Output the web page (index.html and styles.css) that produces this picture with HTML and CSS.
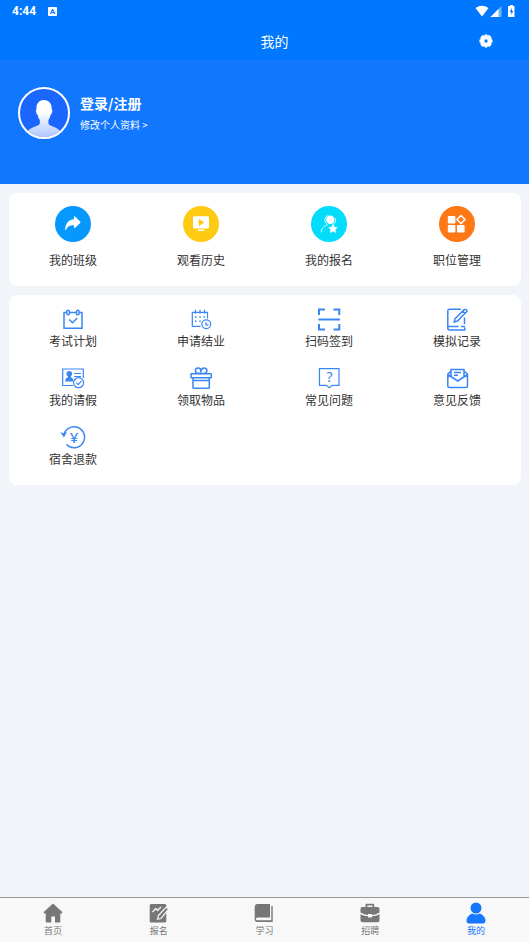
FILE: index.html
```html
<!DOCTYPE html>
<html lang="zh-CN">
<head>
<meta charset="utf-8">
<meta name="viewport" content="width=device-width, initial-scale=1">
<title>我的</title>
<link rel="stylesheet" href="styles.css">
</head>
<body>
<div class="status">
  <span class="clock">4:44</span>
  <svg class="status-app" viewBox="0 0 9 9" aria-hidden="true"><rect width="9" height="9" rx="1" fill="#fff"/><text x="4.5" y="7.2" text-anchor="middle" class="app-letter">A</text></svg>
  <svg class="status-signals" viewBox="0 0 42 14" aria-hidden="true">
    <path d="M0.5 4Q7 -0.6 13.5 4L7 12.5Z" fill="#fff"/>
    <path d="M15.500 13L26.500 2V13Z" fill="#fff" opacity=".45"/><path d="M15.500 13L23.500 5V13Z" fill="#fff"/>
    <path d="M34 2H35V1H38V2H39.500V13H33V2Z" fill="#fff"/><path d="M37 4L34.700 8H36.200V11L38.200 7H37Z" fill="#0878ff"/>
  </svg>
</div>
<header class="titlebar">
  <h1>我的</h1>
  <button class="settings" type="button" aria-label="设置">
    <svg viewBox="0 0 14 14"><path fill="#fff" stroke="#fff" stroke-width=".5" stroke-linejoin="round" fill-rule="evenodd" d="M5.400 1.900L6 .7H8L8.600 1.900L10.300 1.200L12.300 3.300L12 4.900L13.300 5.800V8.200L12 8.900L12.300 10.700L10.600 12.400L8.900 12.100L8 13.300H6L5.200 12.100L3.400 12.400L1.700 10.700L2 9L.7 8.200V5.800L2 4.900L1.700 3.300L3.700 1.200ZM7 5.100A1.900 1.900 0 1 0 7 8.900A1.900 1.900 0 1 0 7 5.100Z"/></svg>
  </button>
</header>
<section class="profile">
  <svg class="avatar" viewBox="0 0 52 52" aria-hidden="true">
    <defs><linearGradient id="bust" x1="0" y1="0" x2="0" y2="1"><stop offset=".3" stop-color="#fff"/><stop offset="1" stop-color="#aac2ff"/></linearGradient><clipPath id="disc"><circle cx="26" cy="26" r="24"/></clipPath></defs>
    <circle cx="26" cy="26" r="25" fill="#1b66ff"/>
    <path clip-path="url(#disc)" fill="url(#bust)" d="M18.500 22C17.500 10 34.500 10 33.700 22C35 23 34 27 32.500 28Q32 31 30.500 33V37C34 40.500 41 40 43 46V52H9V46C11 40 18 40.500 21.800 37V33Q20 31 19.700 28C18 27 17.500 23 18.500 22Z"/>
    <circle cx="26" cy="26" r="25" fill="none" stroke="#fff" stroke-width="2"/>
  </svg>
  <div class="who">
    <a class="login" href="#login">登录/注册</a>
    <a class="edit" href="#profile">修改个人资料 &gt;</a>
  </div>
</section>
<main>
  <nav class="card primary" aria-label="快捷入口">
    <a href="#class"><svg viewBox="0 0 36 36"><circle cx="18" cy="18" r="18" fill="#0798ff"/><path fill="#fff" d="M19 10.800Q19.400 10 20.200 10.700L25.200 15.600Q25.900 16.300 25.200 17L20.200 21.800Q19.400 22.500 19 21.600V19.300C15 19 12.500 20.500 11 23.700Q10.200 24.300 10.200 23C10.500 17.500 13.500 13.600 19 13.200Z"/></svg><span>我的班级</span></a>
    <a href="#history"><svg viewBox="0 0 36 36"><circle cx="18" cy="18" r="18" fill="#ffcb12"/><rect x="10" y="10.300" width="16" height="12.200" rx="1.200" fill="#fff"/><path fill="#ffcb12" d="M16.200 13.600L20.700 16.400L16.200 19.300Z" stroke="#ffcb12" stroke-linejoin="round"/><path d="M15.500 24.300H20.800" stroke="#fff" stroke-width="1.400" stroke-linecap="round"/></svg><span>观看历史</span></a>
    <a href="#signup"><svg viewBox="0 0 36 36"><circle cx="18" cy="18" r="18" fill="#03dcfb"/><circle cx="19.300" cy="13.700" r="4.200" fill="#fff"/><path d="M17 9.300A5.300 5.300 0 0 0 16 18.500M16 19C12.500 20 10.500 22.500 10.200 26M22 18.500C24 17.500 25 15.500 24.300 12.500" fill="none" stroke="#fff" stroke-width=".8" stroke-linecap="round"/><path fill="#fff" stroke="#fff" stroke-width=".6" stroke-linejoin="round" d="M22 18.400L23.300 21.200L26.300 21.500L24.100 23.600L24.700 26.600L22 25.100L19.300 26.600L19.900 23.600L17.700 21.500L20.700 21.200Z"/></svg><span>我的报名</span></a>
    <a href="#jobs"><svg viewBox="0 0 36 36"><circle cx="18" cy="18" r="18" fill="#ff7816"/><g fill="#fff"><rect x="8.800" y="10" width="7.600" height="7.400" rx="1"/><rect x="8.800" y="19" width="7.600" height="7.400" rx="1"/><rect x="18" y="19" width="7.600" height="7.400" rx="1"/></g><path d="M22 9.500L26 13.500L22 17.500L18 13.500Z" fill="none" stroke="#fff" stroke-width="1.600" stroke-linejoin="round"/></svg><span>职位管理</span></a>
  </nav>
  <nav class="card secondary" aria-label="更多服务">
    <a href="#plan"><svg viewBox="0 0 24 24"><path d="M5.500 4.500H3V20.300H21V4.500H18.500M9 4.500H15M8.300 11.500L11.500 14.800L16.200 10"/><rect x="5.800" y="2.300" width="2.600" height="4.500" rx="1.300"/><rect x="15.500" y="2.300" width="2.600" height="4.500" rx="1.300"/></svg><span>考试计划</span></a>
    <a href="#finish"><svg viewBox="0 0 24 24"><path class="thin" d="M11.500 18.300H3.300V4.300H18.500V10.500M6.500 1.800V5.800M11 1.800V5.800M15.500 1.800V5.800"/><path d="M6 9H7.500M10.300 9H11.800M14.500 9H16M6 13.300H7.500M10.300 13.300H11.800"/><circle class="thin" cx="17.300" cy="16.300" r="4.400"/><path class="thin" d="M17 14V16.800H19.500"/></svg><span>申请结业</span></a>
    <a href="#scan"><svg class="strong" viewBox="0 0 24 24"><path d="M2 7V1.500H8M16.500 1.500H22.300V7M2 16V21.500H8M16.500 21.500H22.300V16M1.300 11.500H23"/></svg><span>扫码签到</span></a>
    <a href="#mock"><svg viewBox="0 0 24 24"><path d="M16 1.300H4.500Q2.800 1.300 2.800 3V20Q2.800 22 4.800 22H19.800V19.500M19.500 9.500V16M3 18.500H13.500M16 18.500H20"/><path d="M10 10.700L19.300 1.500Q21.500 1 22 3.300L12.500 13L9.300 14ZM17.700 3.300L20.200 5.600"/></svg><span>模拟记录</span></a>
    <a href="#leave"><svg viewBox="0 0 24 24"><path class="thin" d="M12 18.500H1.700V2H22.300V11M13 6.500H20M13 9.500H20M13 12.500H15"/><circle class="solid" cx="8.300" cy="6.700" r="2.800"/><path class="solid" d="M7 8H9.700V10.300Q12.500 11 12.500 14.500H4.100Q4.200 11 7 10.300Z"/><circle class="thin" cx="17.600" cy="15.700" r="5"/><path class="thin" d="M15.300 15.700L17.200 17.600L20.500 13.800"/></svg><span>我的请假</span></a>
    <a href="#goods"><svg viewBox="0 0 24 24"><rect x="2" y="6.800" width="20.300" height="4" rx=".5"/><path d="M4 10.800V20.500Q4 21.300 5 21.300H19.300Q20.300 21.300 20.300 20.500V10.800M4 13.600H20.300M12.200 6.500L9 6.300A2.700 2.700 0 1 1 11.800 3.400V5.500M12.300 6.500L15.500 6.300A2.700 2.700 0 1 0 12.500 3.400"/></svg><span>领取物品</span></a>
    <a href="#faq"><svg viewBox="0 0 24 24"><path class="thin" d="M2.500 1.700H22V18.300H15.500L12.200 20.700L9.500 18.300H2.500Z"/><text class="mark" x="12.500" y="14.800" text-anchor="middle">?</text></svg><span>常见问题</span></a>
    <a href="#feedback"><svg viewBox="0 0 24 24"><path d="M5.500 4.500L2.800 7V19Q2.800 20.500 4.300 20.500H21Q22.500 20.500 22.500 19V7L19.500 4.500M2.800 7.500L12.700 14L22.500 7.500M6 9V2.500H19V9M9 5.500H16M9 8.300H13"/></svg><span>意见反馈</span></a>
    <a href="#refund"><svg viewBox="0 0 24 24"><path d="M2.700 9.500A10.500 10.500 0 1 1 5.500 18.500"/><path class="solid" d="M-.8 6L2.200 7.300L6 5.700L3 11.500Z"/><text class="mark yen" x="13" y="16.500" text-anchor="middle">¥</text></svg><span>宿舍退款</span></a>
  </nav>
</main>
<nav class="tabs" aria-label="主导航">
  <a href="#home"><svg viewBox="0 0 20 20"><path d="M10 .5L19.300 9Q19.500 10.500 18 10.500H17.300V18.500Q17.300 19.500 16.300 19.500H12V13.500H8.300V19.500H3.700Q2.700 19.500 2.700 18.500V10.500H2Q.5 10.500 .7 9Z"/></svg><span>首页</span></a>
  <a href="#enroll"><svg viewBox="0 0 20 20"><rect x=".7" y="1" width="16.600" height="18.500" rx="1.500"/><path d="M3.500 9L6.800 5.500L8.500 7.500L12 4" fill="none" stroke="#f8f8f8" stroke-width="1.300"/><path d="M9.500 12.500L17 4.300Q19.200 4.300 19.300 6.500L12 15.500L8.500 16.300Z" stroke="#f8f8f8" stroke-width="1.200"/></svg><span>报名</span></a>
  <a href="#study"><svg viewBox="0 0 20 20"><path d="M3.500 1H16V14.500H3.500Q1.800 14.500 1.800 16Q1.800 17.300 3.500 17.300H17.300V3H18.700V19H3Q.7 19 .7 16V4Q.7 1 3.500 1Z"/><path d="M3.500 16H16.500" stroke="#f8f8f8" stroke-width="1.400"/></svg><span>学习</span></a>
  <a href="#recruit"><svg viewBox="0 0 20 20"><path fill-rule="evenodd" d="M5.500 4V2Q5.500 .8 6.700 .8H13Q14.300 .8 14.300 2V4H17.500Q19.500 4 19.500 6V9.500Q15 12 12 12V11H8V12Q4 11.500 .5 9.500V6Q.5 4 2.500 4ZM7.300 4H12.500V2.500H7.300Z"/><path d="M.5 11.200Q4 13.200 8 13.300V14.500H12V13.300Q16 13 19.500 11.200V17.500Q19.500 19.300 17.500 19.300H2.500Q.5 19.300 .5 17.500Z"/></svg><span>招聘</span></a>
  <a class="active" href="#me" aria-current="page"><svg viewBox="0 0 20 20"><circle cx="10" cy="5" r="5.500"/><path d="M6 10.500Q10 12.500 14 10.500Q19.500 13 19.500 18Q19.500 20 17.500 20.500H2.500Q.5 20 .5 18Q.5 13 6 10.500Z"/></svg><span>我的</span></a>
</nav>
</body>
</html>
```
FILE: styles.css
```css
* { box-sizing: border-box; }
body {
  margin: 0;
  min-height: 100vh;
  display: flex;
  flex-direction: column;
  background: #f1f5f9;
  color: #333;
  font-family: "Noto Sans CJK SC", sans-serif;
}
a { color: inherit; text-decoration: none; }
svg { display: block; overflow: visible; }

.status {
  display: flex;
  align-items: center;
  height: 22px;
  padding: 0 12px;
  background: #0077ff;
  color: #fff;
}
.clock { font: bold 12px/22px Roboto, sans-serif; }
.status-app { width: 9px; height: 9px; margin-left: 12px; }
.app-letter { font: bold 8px Roboto, sans-serif; fill: #0077ff; }
.status-signals { width: 42px; height: 14px; margin-left: auto; }

.titlebar {
  display: grid;
  grid-template-columns: 1fr auto 1fr;
  align-items: center;
  height: 38px;
  padding: 0 36px 0 56px;
  background: #0077ff;
  color: #fff;
}
.titlebar h1 {
  grid-column: 2;
  margin: 0;
  font-size: 14px;
  line-height: 20px;
  font-weight: 400;
}
.settings {
  justify-self: end;
  padding: 0;
  border: 0;
  background: none;
}
.settings svg { width: 14px; height: 14px; }

.profile {
  display: flex;
  gap: 10px;
  height: 124px;
  padding: 27px 18px;
  background: #1177ff;
  color: #fff;
}
.avatar { width: 52px; height: 52px; }
.who { display: flex; flex-direction: column; gap: 4px; padding-top: 6px; }
.login { font-size: 14px; line-height: 20px; font-weight: 700; }
.edit { font-size: 10px; line-height: 16px; }

main {
  flex: 1;
  display: flex;
  flex-direction: column;
  gap: 9px;
  padding: 9px 8px 9px 9px;
}
.card {
  display: grid;
  grid-template-columns: repeat(4, 1fr);
  border-radius: 8px;
  background: #fff;
  font-size: 12px;
  line-height: 18px;
}
.card a { display: flex; flex-direction: column; align-items: center; }
.primary { padding: 13px 0 17px; }
.primary a { gap: 9px; }
.primary svg { width: 36px; height: 36px; }
.secondary { padding: 13px 0 17px; row-gap: 17px; }
.secondary svg {
  width: 24px;
  height: 24px;
  fill: none;
  stroke: #3a86f5;
  stroke-width: 1.5px;
}
.secondary .strong { stroke-width: 2px; }
.secondary .thin { stroke-width: 1.2px; }
.secondary .solid { fill: #3a86f5; stroke: none; }
.mark { font: 14px "Noto Sans", sans-serif; fill: #3a86f5; stroke: none; }
.yen { font-weight: 500; font-size: 15px; }

.tabs {
  display: grid;
  grid-template-columns: repeat(5, 1fr);
  height: 45px;
  padding-top: 5px;
  border-top: 1px solid #999;
  background: #f8f8f8;
  color: #777;
  font-size: 9px;
  line-height: 16px;
}
.tabs a { display: flex; flex-direction: column; align-items: center; }
.tabs svg { width: 20px; height: 20px; fill: currentColor; }
.tabs .active { color: #1677ff; }
```
